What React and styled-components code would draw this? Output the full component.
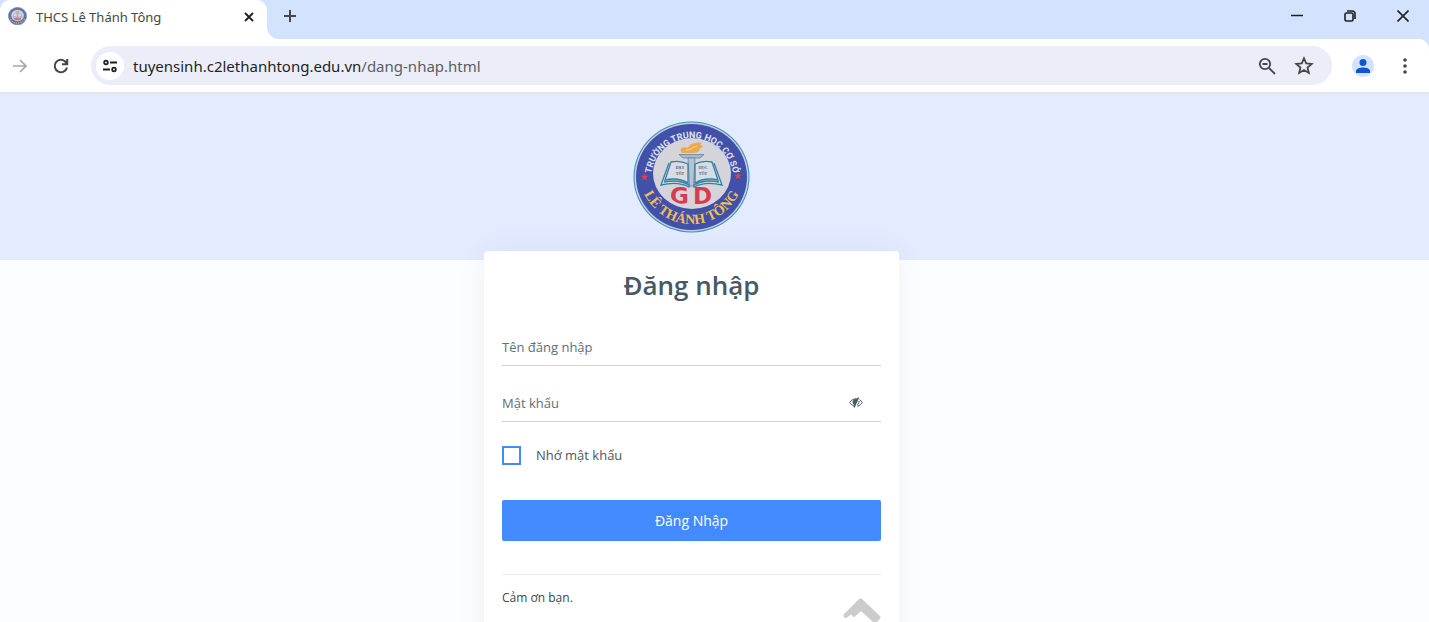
import { useId, useState } from "react";
import styled, { createGlobalStyle } from "styled-components";

const GlobalStyle = createGlobalStyle`
  * {
    box-sizing: border-box;
  }
  body {
    margin: 0;
    font-family: "Open Sans", "Noto Sans", sans-serif;
  }
  button,
  input {
    font-family: inherit;
  }
`;

const Window = styled.div`
  height: 100vh;
  display: flex;
  flex-direction: column;
  overflow: hidden;
  background-color: #fcfdff;
`;
const TabStrip = styled.div`
  height: 39px;
  display: flex;
  background-color: #d3e3fd;
`;
const Tab = styled.div`
  width: 267px;
  padding: 0 9px 6px 8px;
  display: flex;
  align-items: center;
  gap: 9px;
  border-radius: 10px 10px 0 0;
  background-color: white;
`;
const TabTitle = styled.span`
  flex: 1;
  font-family: "Noto Sans", sans-serif;
  font-size: 13px;
  color: #444746;
`;
const StripRest = styled.div`
  flex: 1;
  display: flex;
  background-color: white;
`;
const StripInner = styled.div`
  flex: 1;
  display: flex;
  justify-content: space-between;
  align-items: center;
  padding: 0 16px 7px 13px;
  border-bottom-left-radius: 12px;
  background-color: #d3e3fd;
`;
const WindowButtons = styled.div`
  display: flex;
  gap: 33px;
`;
const IconButton = styled.button`
  display: flex;
  align-items: center;
  justify-content: center;
  width: ${(props) => props.$size || 20}px;
  height: ${(props) => props.$size || 20}px;
  padding: 0;
  border: none;
  border-radius: 50%;
  cursor: pointer;
  color: ${(props) => props.$color || "#1f1f1f"};
  background-color: ${(props) => props.$bg || "transparent"};
`;
const ToolbarEdge = styled.div`
  background-color: #d3e3fd;
`;
const Toolbar = styled.div`
  height: 55px;
  display: flex;
  align-items: center;
  justify-content: space-between;
  padding: 0 14px 0 10px;
  gap: 20px;
  border-bottom: 2px solid #e3e5e9;
  border-top-right-radius: 10px;
  background-color: white;
`;
const Actions = styled.div`
  display: flex;
  align-items: center;
  gap: 21px;
`;
const AddressBar = styled.div`
  flex: 1;
  height: 39px;
  display: flex;
  align-items: center;
  gap: 17px;
  padding: 0 18px 0 5px;
  border-radius: 20px;
  background-color: #ebeef8;
`;
const Address = styled.div`
  flex: 1;
  margin-left: -8px;
  font-family: "Noto Sans", sans-serif;
  font-size: 15px;
  color: #1f1f1f;
`;
const Path = styled.span`
  color: #5a5d61;
`;

const Page = styled.main`
  flex: 1;
  min-height: 0;
  padding-right: 46px;
  display: flex;
  flex-direction: column;
  align-items: center;
  background: linear-gradient(#e2ebff 166px, #fcfdff 166px);
`;
const Logo = styled.div`
  padding: 27px 0 18px;
  line-height: 0;
`;
const Card = styled.form`
  flex: none;
  width: 100%;
  max-width: 415px;
  padding: 17px 18px 40px;
  border-radius: 4px;
  background-color: white;
  box-shadow: 0 0 28px rgba(69, 90, 100, 0.07);
`;
const Title = styled.h1`
  margin: 0 0 26px;
  text-align: center;
  font-size: 26px;
  line-height: 34px;
  font-weight: 600;
  color: #455a64;
`;
const Field = styled.div`
  height: 38px;
  margin-bottom: 18px;
  display: flex;
  align-items: center;
  padding-right: 18px;
  border-bottom: 1px solid #d3d3d5;
`;
const Input = styled.input`
  flex: 1;
  min-width: 0;
  height: 100%;
  padding: 0;
  border: none;
  outline: none;
  font-size: 13px;
  color: #455a64;
  background: transparent;
  &::placeholder {
    color: #607078;
    opacity: 1;
  }
`;
const Remember = styled.label`
  display: flex;
  align-items: center;
  gap: 15px;
  margin: 24px 0 35px;
  font-size: 13px;
  line-height: 19px;
  color: #4f5557;
`;
const Checkbox = styled.input`
  appearance: none;
  width: 19px;
  height: 19px;
  margin: 0;
  border: 2px solid #448aff;
  background-color: white;
  &:checked {
    background-color: #448aff;
  }
`;
const Submit = styled.button`
  width: 100%;
  height: 41px;
  border: none;
  border-radius: 2px;
  cursor: pointer;
  font-size: 14px;
  font-weight: 400;
  color: white;
  background-color: #448aff;
`;
const Footer = styled.div`
  margin-top: 33px;
  padding-top: 14px;
  display: flex;
  justify-content: space-between;
  border-top: 1px solid #ebebeb;
`;
const Thanks = styled.p`
  margin: 0;
  font-size: 12px;
  line-height: 18px;
  color: #37474f;
`;
const TopLink = styled.a`
  padding-top: 9px;
  line-height: 0;
  color: #ccc;
`;

const Book = () => (
  <>
    <path
      d="M49 32C45 28 50 25 54 27 56 26 57 22 63 22 68 21 70 22 67 24 71 24 70 27 66 28 68 30 64 32 59 32Z"
      fill="#e9a94c"
    />
    <path d="M53 29c4 1 6-3 11-4" fill="none" stroke="#f5dc9c" />
    <path d="M46 33.500H71L67 37H50Z" fill="#a9b9ca" stroke="#5c86a3" strokeWidth=".8" />
    <path d="M55 37H62L60.500 65H56.500Z" fill="#b7c3d0" stroke="#5c86a3" strokeWidth=".8" />
    <g fill="#d6dde4" stroke="#337fa6" strokeWidth="1.300">
      <path d="M36 42 28 64Q45 60 56 66V64Q46 58 31 61" />
      <path d="M81 42 89 64Q72 60 61 66V64Q71 58 86 61" />
      <path d="M38 41Q47 39 55 43V62Q45 56 32 59Z" />
      <path d="M79 41Q70 39 62 43V62Q72 56 85 59Z" />
    </g>
  </>
);

const EmblemText = () => {
  const id = useId();
  return (
    <>
      <defs>
        <path id={`${id}top`} d="M17.500 59A41.500 42 0 0 1 100.500 59" />
        <path id={`${id}bottom`} d="M5.500 48A53 55 0 0 0 111.500 48" />
        <clipPath id={`${id}bowl`}>
          <path d="M33 66H84Q80 83 66 83H51Q37 83 33 66Z" />
        </clipPath>
      </defs>
      <text
        fill="#dfe3f2"
        fontFamily="Roboto, Liberation Sans, sans-serif"
        fontWeight="700"
        fontSize="9"
        textAnchor="middle"
      >
        <textPath href={`#${id}top`} startOffset="50%">
          TRƯỜNG TRUNG HỌC CƠ SỞ
        </textPath>
      </text>
      <text
        fill="#eebf5c"
        fontFamily="Liberation Serif, serif"
        fontWeight="700"
        fontSize="14"
        textAnchor="middle"
      >
        <textPath href={`#${id}bottom`} startOffset="50%">
          LÊ THÁNH TÔNG
        </textPath>
      </text>
      <g
        fill="#52627c"
        fontFamily="Liberation Serif, serif"
        fontWeight="700"
        fontSize="4"
        textAnchor="middle"
      >
        <text x="47" y="48">DẠY</text>
        <text x="47" y="54">TỐT</text>
        <text x="70" y="48">HỌC</text>
        <text x="70" y="54">TỐT</text>
      </g>
      <text
        x="37 60"
        y="83"
        clipPath={`url(#${id}bowl)`}
        fill="#d83b4f"
        fontFamily="DejaVu Sans, sans-serif"
        fontWeight="700"
        fontSize="23"
      >
        GD
      </text>
    </>
  );
};

const Emblem = ({ width, small }) => {
  const star = "M0-4 1-1.2 4-1.2 1.6.6 2.5 3.4 0 1.700-2.5 3.4-1.6.6-4-1.200-1-1.200Z";
  return (
    <svg width={width} viewBox="0 0 117 112" aria-hidden="true">
      <ellipse cx="58.500" cy="56" rx="58" ry="55.500" fill="#3f8fb5" />
      <ellipse cx="58.500" cy="56" rx="57" ry="54.500" fill="#c3cfe2" />
      <ellipse cx="58.500" cy="56" rx="55.500" ry="53" fill={small ? "#6470a8" : "#4150a8"} />
      <ellipse cx="59" cy="52.500" rx="39" ry="35.500" fill="#d5d4da" />
      <Book />
      {small ? (
        <>
          <path d="M34 68H83Q78 82 66 82H51Q39 82 34 68Z" fill="#d8707c" />
          <path
            d="M14 74Q28 99 58 99T103 74"
            fill="none"
            stroke="#c9a878"
            strokeWidth="8"
            strokeDasharray="9 5"
          />
        </>
      ) : (
        <>
          <path d={star} transform="translate(11.500 56)" fill="#dc4055" />
          <path d={star} transform="translate(105 55)" fill="#dc4055" />
          <EmblemText />
        </>
      )}
    </svg>
  );
};

const Stroke = ({ size = 16, width = 2, children }) => (
  <svg
    width={size}
    height={size}
    viewBox={`0 0 ${size} ${size}`}
    fill="none"
    stroke="currentColor"
    strokeWidth={width}
    aria-hidden="true"
  >
    {children}
  </svg>
);

const BrowserTabs = () => (
  <TabStrip>
    <Tab>
      <Emblem width={19} small />
      <TabTitle>THCS Lê Thánh Tông</TabTitle>
      <IconButton $size={18} aria-label="Close tab">
        <Stroke size={10} width={1.8}>
          <path d="M1 1 9 9M9 1 1 9" />
        </Stroke>
      </IconButton>
    </Tab>
    <StripRest>
      <StripInner>
        <IconButton aria-label="New tab" $color="#444746">
          <Stroke size={12}>
            <path d="M6 0V12M0 6H12" />
          </Stroke>
        </IconButton>
        <WindowButtons>
          <IconButton aria-label="Minimize">
            <Stroke size={12} width={1.5}>
              <path d="M0 5.500H12" />
            </Stroke>
          </IconButton>
          <IconButton aria-label="Restore">
            <Stroke size={12} width={1.6}>
              <rect x="1" y="3" width="8" height="8" rx="1.500" />
              <path d="M3 1H8.500A2.500 2.500 0 0 1 11 3.500V9" />
            </Stroke>
          </IconButton>
          <IconButton aria-label="Close">
            <Stroke size={12} width={1.6}>
              <path d="M.5.5 11.500 11.500M11.500.5.5 11.500" />
            </Stroke>
          </IconButton>
        </WindowButtons>
      </StripInner>
    </StripRest>
  </TabStrip>
);

const BrowserToolbar = () => (
  <ToolbarEdge>
    <Toolbar>
      <Actions>
        <IconButton aria-label="Forward" $color="#a5a7a9">
          <Stroke size={14} width={1.7}>
            <path d="M0 7H13M7 1 13 7 7 13" />
          </Stroke>
        </IconButton>
        <IconButton aria-label="Reload" $color="#444746">
          <Stroke size={16}>
            <path d="M14 9.500A6.200 6.200 0 1 1 12.700 4L14 5.500M14.200 1V6.300H9" />
          </Stroke>
        </IconButton>
      </Actions>
      <AddressBar>
        <IconButton $size={28} $bg="white" aria-label="Site information">
          <Stroke size={16} width={1.8}>
            <circle cx="4" cy="4.500" r="1.800" />
            <path d="M8 4.500H15M1 11.500H8" />
            <circle cx="12" cy="11.500" r="1.800" />
          </Stroke>
        </IconButton>
        <Address>
          tuyensinh.c2lethanhtong.edu.vn<Path>/dang-nhap.html</Path>
        </Address>
        <IconButton aria-label="Zoom" $color="#444746">
          <Stroke size={18} width={1.8}>
            <circle cx="7" cy="7" r="5.200" />
            <path d="M11 11 17 17M4.500 7H9.500" />
          </Stroke>
        </IconButton>
        <IconButton aria-label="Bookmark" $color="#444746">
          <Stroke size={20} width={1.8}>
            <path d="M10 2.300 12.200 7.400 17.700 7.900 13.500 11.500 14.800 16.900 10 14 5.200 16.900 6.500 11.500 2.300 7.900 7.800 7.400Z" />
          </Stroke>
        </IconButton>
      </AddressBar>
      <Actions>
        <IconButton $size={22} $bg="#d3e3fd" $color="#0b57d0" aria-label="Profile">
          <svg width="14" height="14" viewBox="0 0 14 14" fill="currentColor">
            <circle cx="7" cy="3.500" r="3.500" />
            <path d="M0 14V12C0 9.500 4 8.500 7 8.500S14 9.500 14 12V14Z" />
          </svg>
        </IconButton>
        <IconButton aria-label="Menu" $color="#444746">
          <svg width="4" height="16" viewBox="0 0 4 16" fill="currentColor">
            <circle cx="2" cy="2" r="1.800" />
            <circle cx="2" cy="8" r="1.800" />
            <circle cx="2" cy="14" r="1.800" />
          </svg>
        </IconButton>
      </Actions>
    </Toolbar>
  </ToolbarEdge>
);

const LoginForm = () => {
  const [show, setShow] = useState(false);

  const handleSubmit = (e) => {
    e.preventDefault();
  };
  return (
    <Card onSubmit={handleSubmit}>
      <Title>Đăng nhập</Title>
      <Field>
        <Input name="username" placeholder="Tên đăng nhập" aria-label="Tên đăng nhập" />
      </Field>
      <Field>
        <Input
          type={show ? "text" : "password"}
          name="password"
          placeholder="Mật khẩu"
          aria-label="Mật khẩu"
        />
        <IconButton
          type="button"
          $size={14}
          $color="#455a64"
          aria-label="Hiện mật khẩu"
          onClick={() => setShow(!show)}
        >
          <svg width="14" height="12" viewBox="0 0 14 12" fill="none" stroke="currentColor">
            <path d="M5.500 9C3.500 8.500 1.700 7.300.7 5.500 2 3.200 4.300 1.800 7 1.800L8.300 1.900M10.500 2.700C11.800 3.400 12.700 4.400 13.300 5.500 12.200 7.500 10.300 8.800 8 9.100" />
            <path d="M9.500.5 5 10.500" strokeWidth="1.400" />
            <path d="M7.800 2.500C5.500 2 3.800 3.500 4 5.500 4.100 6.700 4.800 7.500 5.600 8Z" fill="currentColor" />
            <path d="M10 4C10.300 5.500 9.700 7 8.300 7.700" />
          </svg>
        </IconButton>
      </Field>
      <Remember>
        <Checkbox type="checkbox" name="remember" />
        Nhớ mật khẩu
      </Remember>
      <Submit type="submit">Đăng Nhập</Submit>
      <Footer>
        <Thanks>Cảm ơn bạn.</Thanks>
        <TopLink href="#top" aria-label="Lên đầu trang">
          <svg width="38" height="32" viewBox="0 0 38 32" fill="currentColor">
            <path d="M16 1Q17.500-.5 19 1L36.500 17.500Q38.500 19.500 36.500 21.500L34 24Q32 26 30 24L18 13 12 18.500Q11 19.500 10 18.500L8 16.500 4 19.500Q2 20.500 1 19 0 17.500 1 16Z" />
          </svg>
        </TopLink>
      </Footer>
    </Card>
  );
};

const App = () => {
  return (
    <Window>
      <GlobalStyle />
      <BrowserTabs />
      <BrowserToolbar />
      <Page>
        <Logo>
          <Emblem width={117} />
        </Logo>
        <LoginForm />
      </Page>
    </Window>
  );
};

export default App;
